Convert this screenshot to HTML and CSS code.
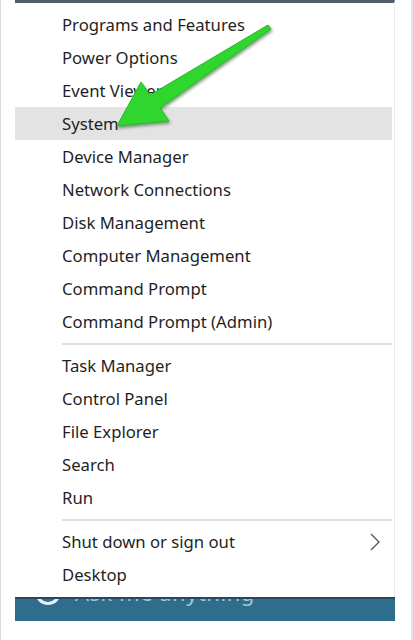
FILE: index.html
```html
<!DOCTYPE html>
<html lang="en">
  <head>
    <meta charset="utf-8" />
    <meta name="viewport" content="width=device-width, initial-scale=1" />
    <title>Quick Link menu</title>
    <link rel="stylesheet" href="styles.css">
  </head>
  <body>
    <div class="frame">
      <nav class="menu">
        <a class="item" href="#">Programs and Features</a>
        <a class="item" href="#">Power Options</a>
        <a class="item" href="#">Event Viewer</a>
        <a class="item active" href="#">System</a>
        <a class="item" href="#">Device Manager</a>
        <a class="item" href="#">Network Connections</a>
        <a class="item" href="#">Disk Management</a>
        <a class="item" href="#">Computer Management</a>
        <a class="item" href="#">Command Prompt</a>
        <a class="item" href="#">Command Prompt (Admin)</a>
        <div class="sep"></div>
        <a class="item" href="#">Task Manager</a>
        <a class="item" href="#">Control Panel</a>
        <a class="item" href="#">File Explorer</a>
        <a class="item" href="#">Search</a>
        <a class="item" href="#">Run</a>
        <div class="sep"></div>
        <a class="item more" href="#">Shut down or sign out
          <svg class="chev" width="10" height="18" viewBox="0 0 10 18"><path d="M1 1 L9 9 L1 17" fill="none" stroke="#555" stroke-width="1.3"/></svg>
        </a>
        <a class="item" href="#">Desktop</a>

        <!-- pointer drawn over the menu -->
        <svg class="arrow" width="300" height="140" viewBox="0 0 300 140">
          <defs>
            <filter id="shade" x="-20%" y="-20%" width="140%" height="140%">
              <feDropShadow dx="1" dy="2" stdDeviation="1.6" flood-color="#1d4d1d" flood-opacity="0.55"/>
            </filter>
          </defs>
          <polygon points="268,25 271,29 160,108 169,121 117,126 141,82 150,95" fill="#2fd62f" stroke="#27b827" stroke-width="1" stroke-linejoin="round" filter="url(#shade)"/>
        </svg>
      </nav>
      <div class="taskbar">
        <div class="search">
          <span class="ring"></span>
          <span class="ask">Ask me anything</span>
        </div>
      </div>
    </div>
  </body>
</html>
```

FILE: styles.css
```css
* {
  box-sizing: border-box;
}
body {
  margin: 0;
  background: #fff;
  font-family: "Noto Sans", sans-serif;
}
.frame {
  width: 413px;
  height: 640px;
  padding: 0 16px 0 14px;
  border-left: 1px solid #dcdcdc;
  border-right: 2px solid #e4e4e4;
}

/* menu */
.menu {
  position: relative;
  display: flex;
  flex-direction: column;
  border-top: 3px solid #505d6b;
  border-right: 1px solid #ececec;
  padding: 5px 0 6px;
}
.item {
  display: flex;
  align-items: center;
  justify-content: space-between;
  height: 33px;
  margin-right: 2px;
  padding: 0 12px 0 47px;
  color: #1f1f1f;
  font-size: 16.7px;
  text-decoration: none;
}
.item.active {
  background: #e3e3e3;
}
.sep {
  height: 11px;
  margin: 0 2px 0 47px;
  display: flex;
  align-items: center;
}
.sep::before {
  content: "";
  flex: 1;
  border-top: 2px solid #e0e0e0;
}
.chev {
  display: block;
}
.arrow {
  position: absolute;
  left: -15px;
  top: -3px;
  pointer-events: none;
}

/* taskbar strip under the menu */
.taskbar {
  display: block;
  height: 24px;
  overflow: hidden;
  background: #2f6d8c;
  border-top: 2px solid #234a61;
}
.search {
  display: flex;
  align-items: center;
  gap: 14px;
  height: 30px;
  margin-top: -22px;
  padding-left: 20px;
}
.ring {
  flex: none;
  width: 26px;
  height: 26px;
  border: 3px solid #e8eef2;
  border-radius: 50%;
}
.ask {
  color: #a9c3d1;
  font-size: 22px;
  line-height: 30px;
  letter-spacing: 0.5px;
}
```
